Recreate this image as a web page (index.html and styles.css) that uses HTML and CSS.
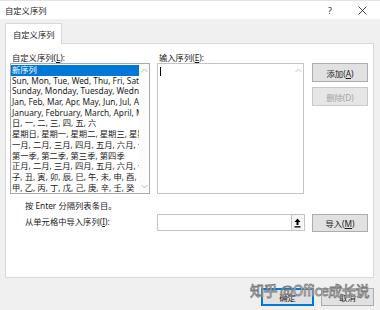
FILE: index.html
```html
<!DOCTYPE html>
<html lang="zh-CN">
<head>
<meta charset="utf-8">
<title>自定义序列</title>
<link rel="stylesheet" href="styles.css">
</head>
<body>
<div class="window">
  <div class="titlebar">
    <span class="title">自定义序列</span>
    <span class="help">?</span>
    <span class="close"><svg width="9" height="9" viewBox="0 0 9 9"><path d="M0.5 0.5L8.5 8.5M8.5 0.5L0.5 8.5" stroke="#333" stroke-width="0.9" fill="none"/></svg></span>
  </div>
  <div class="tabs"><div class="tab">自定义序列</div></div>
  <div class="panel">
    <div class="grid">
      <div class="lbl">自定义序列(<u>L</u>):</div>
      <div class="lbl">输入序列(<u>E</u>):</div>
      <div></div>

      <div class="listbox">
        <ul class="items">
          <li class="sel">新序列</li>
          <li>Sun, Mon, Tue, Wed, Thu, Fri, Sat</li>
          <li>Sunday, Monday, Tuesday, Wednesday, Thursday, Friday, Saturday</li>
          <li>Jan, Feb, Mar, Apr, May, Jun, Jul, Aug, Sep, Oct, Nov, Dec</li>
          <li>January, February, March, April, May, June, July, August</li>
          <li>日, 一, 二, 三, 四, 五, 六</li>
          <li>星期日, 星期一, 星期二, 星期三, 星期四, 星期五, 星期六</li>
          <li>一月, 二月, 三月, 四月, 五月, 六月, 七月, 八月, 九月</li>
          <li>第一季, 第二季, 第三季, 第四季</li>
          <li>正月, 二月, 三月, 四月, 五月, 六月, 七月, 八月, 九月</li>
          <li>子, 丑, 寅, 卯, 辰, 巳, 午, 未, 申, 酉, 戌, 亥</li>
          <li>甲, 乙, 丙, 丁, 戊, 己, 庚, 辛, 壬, 癸</li>
        </ul>
        <div class="vscroll">
          <svg width="7" height="5" viewBox="0 0 7 5"><path d="M0.5 4L3.5 1L6.5 4" stroke="#b8b8b8" fill="none"/></svg>
          <svg width="7" height="5" viewBox="0 0 7 5"><path d="M0.5 1L3.5 4L6.5 1" stroke="#b8b8b8" fill="none"/></svg>
        </div>
      </div>

      <div class="textarea">
        <div class="edit"><span class="caret"></span></div>
        <div class="vscroll">
          <svg width="7" height="5" viewBox="0 0 7 5"><path d="M0.5 4L3.5 1L6.5 4" stroke="#c8c8c8" fill="none"/></svg>
        </div>
      </div>

      <div class="btns">
        <button class="btn">添加(<u>A</u>)</button>
        <button class="btn" disabled>删除(D)</button>
      </div>

      <div class="hints">
        <div>按 Enter 分隔列表条目。</div>
        <div>从单元格中导入序列(<u>I</u>):</div>
      </div>
      <div class="refinput">
        <span class="refbtn"><svg width="7" height="10" viewBox="0 0 7 10"><path d="M3.5 0.5L6.5 4H4.5V7H2.5V4H0.5Z" fill="#000"/><rect x="0.5" y="8.2" width="6" height="1.3" fill="#000"/></svg></span>
      </div>
      <button class="btn import">导入(<u>M</u>)</button>
    </div>
  </div>
  <div class="footer">
    <button class="btn ok">确定</button>
    <button class="btn">取消</button>
  </div>
  <div class="watermark">知乎 @Office成长说</div>
</div>
</body>
</html>
```

FILE: styles.css
```css
* { box-sizing: border-box; }
html, body { margin: 0; padding: 0; }
body {
  width: 380px;
  height: 310px;
  overflow: hidden;
  background: #f0f0f0;
  font-family: "Noto Sans", "Noto Sans CJK SC", sans-serif;
  font-size: 8.3px;
  color: #1a1a1a;
}
.window { position: relative; width: 380px; height: 310px; }

.titlebar {
  height: 19px;
  background: #fff;
  display: flex;
  align-items: center;
  padding-left: 5px;
  border-top: 1px solid #e4e4e4;
}
.title { font-size: 8.3px; flex: 1; }
.help { font-size: 9px; width: 10px; margin-right: 20px; color: #333; }
.close { width: 9px; height: 9px; margin-right: 13px; display: flex; }

.tabs { padding: 4px 0 0 5px; display: flex; }
.tab {
  height: 21px;
  padding: 0 6px 0 7px;
  border: 1px solid #d9d9d9;
  border-bottom: none;
  background: #fff;
  display: flex;
  align-items: center;
  margin-bottom: -1px;
  position: relative;
  z-index: 1;
  white-space: nowrap;
}

.panel {
  margin: 0 6px 0 5px;
  height: 235px;
  background: #fff;
  border: 1px solid #d9d9d9;
  padding: 8px 0 0 4px;
}
.grid {
  display: grid;
  grid-template-columns: 140px 148px 56px;
  column-gap: 7px;
  align-items: start;
}
.lbl { line-height: 11px; height: 11px; padding-left: 2px; white-space: nowrap; }
u { text-decoration: underline; text-underline-offset: 1px; }

.listbox {
  height: 131px;
  border: 1px solid #a9a9a9;
  display: flex;
  background: #fff;
}
.items {
  list-style: none;
  margin: 0;
  padding: 1px 0 0 0;
  flex: 1;
  overflow: hidden;
  min-width: 0;
}
.items li {
  white-space: nowrap;
  line-height: 10.7px;
  height: 10.7px;
  padding-left: 1px;
  overflow: hidden;
}
.items li.sel { background: #0078d7; color: #fff; }
.vscroll {
  width: 10px;
  flex: none;
  display: flex;
  flex-direction: column;
  justify-content: space-between;
  align-items: center;
  padding: 4px 0 4px;
  background: #fbfbfb;
}

.textarea {
  width: 147px;
  height: 131px;
  border: 1px solid #c4c4c4;
  display: flex;
}
.edit { flex: 1; padding: 3px 0 0 2px; }
.caret { display: block; width: 1px; height: 9px; background: #000; }
.textarea .vscroll { justify-content: flex-start; background: #fff; }

.btns { display: flex; flex-direction: column; gap: 5px; }
.btn {
  font-family: inherit;
  font-size: 8.3px;
  color: #1a1a1a;
  height: 19px;
  padding: 0;
  background: #e1e1e1;
  border: 1px solid #adadad;
  border-radius: 0;
  white-space: nowrap;
}
.btn[disabled] { color: #a3a3a3; background: #e6e6e6; border-color: #c8c8c8; }

.hints { padding: 4px 0 0 15px; line-height: 15.5px; grid-column: 1; white-space: nowrap; }
.refinput {
  margin-top: 20px;
  height: 17px;
  border: 1px solid #c4c4c4;
  display: flex;
  justify-content: flex-end;
  background: #fff;
}
.refbtn {
  width: 12px;
  height: 15px;
  border-left: 1px solid #c4c4c4;
  background: #f4f4f4;
  display: flex;
  align-items: center;
  justify-content: center;
  margin-right: 1px;
}
.import { margin-top: 20px; height: 18px; }

.footer {
  display: flex;
  justify-content: flex-end;
  gap: 7px;
  padding: 10px 6px 0 0;
}
.footer .btn { width: 53px; height: 18px; }
.footer .ok { border: 1px solid #0078d7; box-shadow: inset 0 0 0 1px #0078d7; }

.watermark {
  position: absolute;
  left: 250px;
  top: 280px;
  font-size: 14px;
  font-family: "Noto Sans CJK SC", "Noto Sans", sans-serif;
  color: rgba(255, 255, 255, 0.7);
  -webkit-text-stroke: 0.8px #7d7d7d;
  white-space: nowrap;
  letter-spacing: -0.4px;
}
```
